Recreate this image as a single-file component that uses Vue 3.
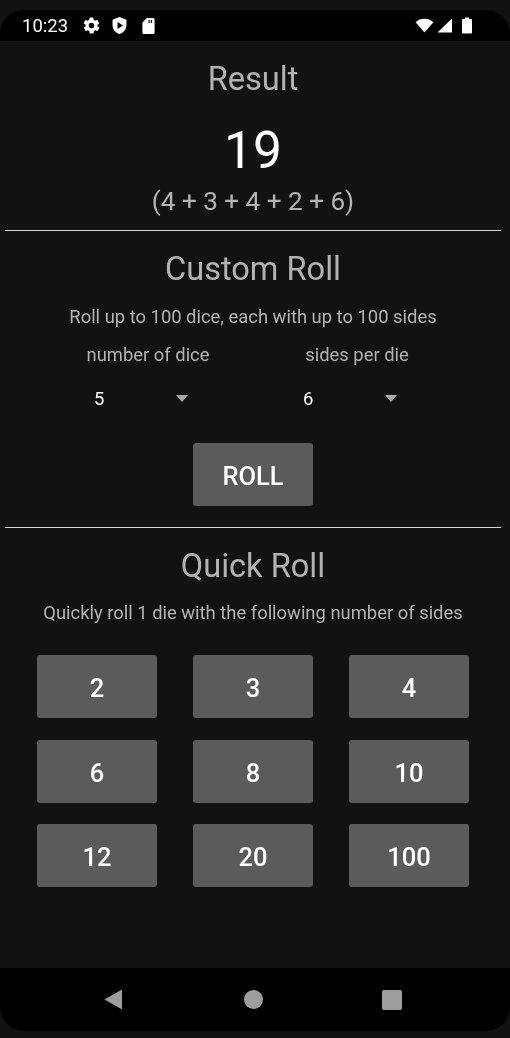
<script setup>
const quick = ['2', '3', '4', '6', '8', '10', '12', '20', '100']
const pickers = [
  { label: 'number of dice', value: '5' },
  { label: 'sides per die', value: '6' }
]
</script>

<template>
  <div class="phone">
    <header class="status">
      <span class="time">10:23</span>
      <svg class="ic gear" viewBox="0 0 24 24"><path fill="#fff" d="M19.4 13a7.5 7.5 0 0 0 0-2l2.1-1.6a.5.5 0 0 0 .1-.7l-2-3.4a.5.5 0 0 0-.6-.2l-2.5 1a7.3 7.3 0 0 0-1.7-1l-.4-2.7a.5.5 0 0 0-.5-.4h-4a.5.5 0 0 0-.5.4l-.4 2.7a7.3 7.3 0 0 0-1.7 1l-2.5-1a.5.5 0 0 0-.6.2l-2 3.4a.5.5 0 0 0 .1.7L4.6 11a7.5 7.5 0 0 0 0 2l-2.1 1.6a.5.5 0 0 0-.1.7l2 3.4a.5.5 0 0 0 .6.2l2.5-1a7.3 7.3 0 0 0 1.7 1l.4 2.7a.5.5 0 0 0 .5.4h4a.5.5 0 0 0 .5-.4l.4-2.7a7.3 7.3 0 0 0 1.7-1l2.5 1a.5.5 0 0 0 .6-.2l2-3.4a.5.5 0 0 0-.1-.7zM12 15.500a3.500 3.500 0 1 1 0-7 3.500 3.500 0 0 1 0 7z"/></svg>
      <svg class="ic shield" viewBox="3 1 18 22"><path fill="#fff" fill-rule="evenodd" d="M12 1 3 4.500v7c0 5.500 3.800 10.300 9 11.500 5.200-1.200 9-6 9-11.500v-7zM9.500 7.500v9l7-4.500z"/></svg>
      <svg class="ic sd" viewBox="4 1.500 16 21"><path fill="#fff" fill-rule="evenodd" d="M10 1.500h8a2 2 0 0 1 2 2v17a2 2 0 0 1-2 2H6a2 2 0 0 1-2-2V7.500zM12 4v4h1.500V4zm3 0v4h1.500V4z"/></svg>
      <span class="spacer"></span>
      <svg class="ic wifi" viewBox="0 0 20 16"><path fill="#fff" d="M10 15.500 0.500 4.500C3 2 6.300 .8 10 .8s7 1.200 9.500 3.700z"/></svg>
      <svg class="ic signal" viewBox="0 0 16 16"><path fill="#fff" d="M16 0.500V15.500H0.500z"/></svg>
      <svg class="ic battery" viewBox="0 0 10 16"><path fill="#fff" d="M3 0h4v1.500h2a1 1 0 0 1 1 1V15a1 1 0 0 1-1 1H1a1 1 0 0 1-1-1V2.500a1 1 0 0 1 1-1h2z"/></svg>
    </header>

    <main class="content">
      <section class="result">
        <h2 class="title">Result</h2>
        <div class="total">19</div>
        <div class="sum">(4 + 3 + 4 + 2 + 6)</div>
      </section>

      <section class="custom">
        <h2 class="title">Custom Roll</h2>
        <p class="hint">Roll up to 100 dice, each with up to 100 sides</p>
        <div class="pickers">
          <div v-for="p in pickers" :key="p.label" class="picker">
            <div class="plabel">{{ p.label }}</div>
            <div class="spinner">
              <span class="pvalue">{{ p.value }}</span>
              <span class="caret"></span>
            </div>
          </div>
        </div>
        <button class="btn roll">ROLL</button>
      </section>

      <section class="quick">
        <h2 class="title">Quick Roll</h2>
        <p class="hint">Quickly roll 1 die with the following number of sides</p>
        <div class="grid">
          <button v-for="q in quick" :key="q" class="btn">{{ q }}</button>
        </div>
      </section>
    </main>

    <footer class="nav">
      <svg class="back" viewBox="0 0 19 21"><path fill="#9e9e9e" d="M18 .5V20.500L.5 10.500z"/></svg>
      <span class="home"></span>
      <span class="recent"></span>
    </footer>
  </div>
</template>

<style>
html, body { margin: 0; background: #121212; }
</style>

<style scoped>
.phone {
  width: 510px;
  height: 1038px;
  display: flex;
  flex-direction: column;
  background: #121212;
  font-family: Roboto, "Liberation Sans", sans-serif;
  overflow: hidden;
  box-sizing: border-box;
  padding-top: 10px;
  padding-bottom: 7px;
}
.status {
  height: 31px;
  flex: none;
  background: #000;
  border-radius: 24px 24px 0 0;
  display: flex;
  align-items: center;
  padding: 0 38px 0 22px;
  color: #fff;
}
.time { font-size: 18.5px; width: 59.500px; will-change: transform; }
.ic { display: block; flex: none; }
.gear { width: 19px; height: 19px; }
.shield { width: 15px; height: 17px; margin-left: 11.500px; }
.sd { width: 13px; height: 16px; margin-left: 15px; }
.spacer { flex: 1; }
.wifi { width: 19px; height: 15px; }
.signal { width: 15px; height: 15px; margin-left: 3px; }
.battery { width: 10px; height: 17px; margin-left: 10px; }

.content { flex: 1; will-change: transform; }
section { display: flex; flex-direction: column; align-items: center; margin: 0 9px 0 5px; }
.title {
  margin: 0;
  font-size: 32.600px;
  font-weight: 400;
  line-height: 38px;
  color: #b3b3b3;
}
.result { height: 190px; padding-top: 19px; box-sizing: border-box; border-bottom: 1px solid #d8d8d8; }
.total { font-size: 51.500px; line-height: 60px; color: #fff; margin-top: 23px; }
.sum { font-size: 26.100px; line-height: 30px; color: #b3b3b3; margin-top: 5px; }
.custom { height: 297px; padding-top: 19px; box-sizing: border-box; border-bottom: 1px solid #d8d8d8; }
.hint { margin: 18px 0 0; font-size: 18.400px; line-height: 22px; color: #b3b3b3; }
.quick .hint { margin-top: 17px; }
.pickers { display: flex; gap: 39px; margin-top: 16px; margin-left: -1px; }
.picker { width: 170px; display: flex; flex-direction: column; }
.plabel { font-size: 18.400px; line-height: 22px; color: #b3b3b3; text-align: center; }
.spinner { display: flex; align-items: center; justify-content: space-between; height: 44px; margin-top: 10px; padding: 0 45px 0 31px; }
.pvalue { font-size: 18.400px; color: #fff; }
.caret { width: 0; height: 0; border-left: 6.500px solid transparent; border-right: 6.500px solid transparent; border-top: 7px solid #aaa; }
.btn {
  width: 119.500px;
  height: 63px;
  border: 0;
  border-radius: 3px;
  background: #5b5b5b;
  color: #fff;
  font-family: inherit;
  font-size: 25.500px;
  font-weight: 500;
  padding: 3px 0 0;
}
.roll { margin-top: 23px; }
.quick { padding-top: 19px; }
.grid { display: grid; grid-template-columns: repeat(3, 119.500px); column-gap: 36.500px; row-gap: 21.500px; margin-top: 31px; }
.nav {
  height: 63px;
  flex: none;
  background: #000;
  border-radius: 0 0 24px 24px;
  position: relative;
}
.back { position: absolute; left: 104px; top: 21px; width: 19px; height: 21px; }
.home { position: absolute; left: 243.500px; top: 22px; width: 19px; height: 19px; border-radius: 50%; background: #9e9e9e; }
.recent { position: absolute; left: 382px; top: 22px; width: 20px; height: 20px; border-radius: 2px; background: #9e9e9e; }
</style>
